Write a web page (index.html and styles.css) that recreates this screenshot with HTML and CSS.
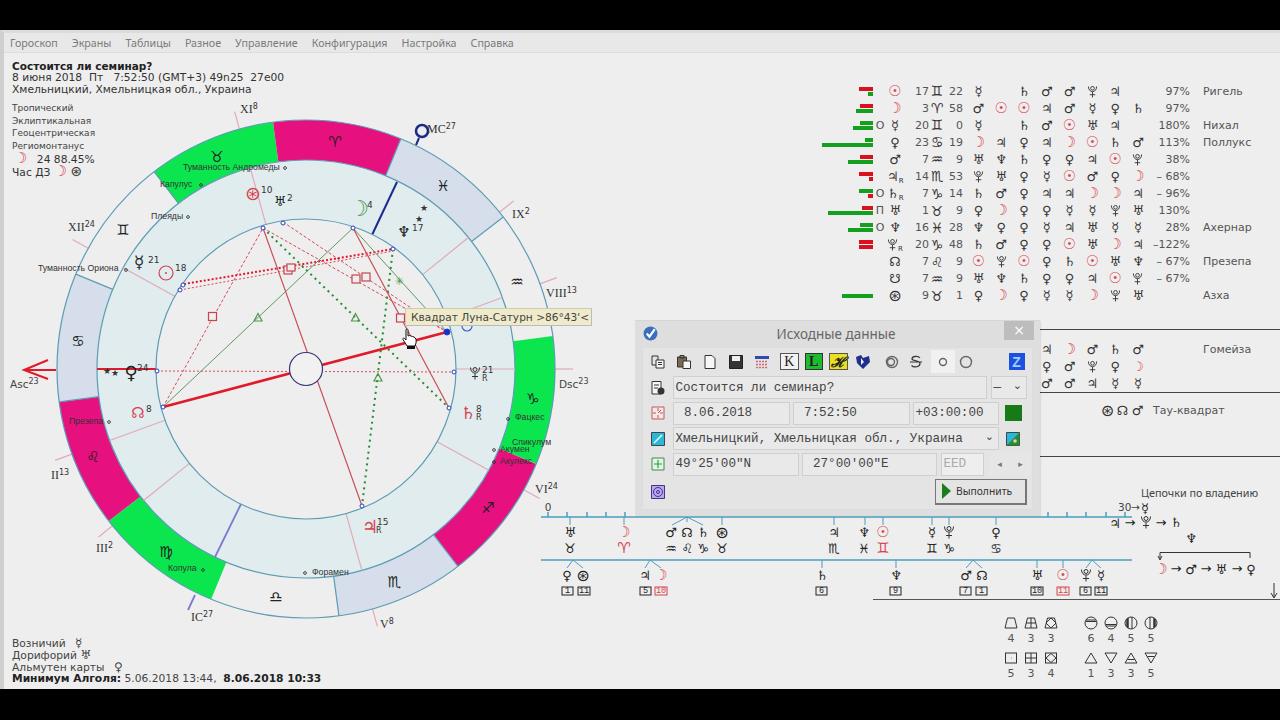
FILE: index.html
```html
<!DOCTYPE html>
<html lang="ru">
<head>
<meta charset="utf-8">
<title>Гороскоп</title>
<link rel="stylesheet" href="styles.css">
</head>
<body>
<div class="app">
  <nav class="menu">
    <span>Гороскоп</span><span>Экраны</span><span>Таблицы</span><span>Разное</span><span>Управление</span><span>Конфигурация</span><span>Настройка</span><span>Справка</span>
  </nav>
  <div class="main">
    <aside class="left">
      <div class="head">
        <div class="b">Состоится ли семинар?</div>
        <div class="pre">8 июня 2018  Пт   7:52:50 (GMT+3) 49n25  27e00</div>
        <div>Хмельницкий, Хмельницкая обл., Украина</div>
      </div>
      <div class="system">
        <div>Тропический</div><div>Эклиптикальная</div><div>Геоцентрическая</div><div>Региомонтанус</div>
      </div>
      <div class="hour">
        <div class="pre"><span class="red sym moonpad">☽</span> 24 88.45%</div>
        <div class="pre">Час ДЗ <span class="red sym">☽</span> <span class="sym fw2">⊛</span></div>
      </div>
      <div class="foot">
        <div>Возничий <span class="sym footsym">☿</span></div>
        <div>Дорифорий <span class="sym">♅</span></div>
        <div>Альмутен карты <span class="sym footsym">♀</span></div>
        <div><b>Минимум Алголя:</b> 5.06.2018 13:44, &nbsp;<b>8.06.2018 10:33</b></div>
      </div>
    </aside>
    <section class="right">
      <div class="table">
        <div class="row"><div class="bars"><i class="bar rd" style="width:14px"></i><i class="bar gn" style="width:5px"></i></div><span></span><span class="c red">☉</span><span class="n">17</span><span class="c">♊</span><span class="m">22</span><span class="c">☿</span><span></span><span class="c">♄</span><span class="c">♂</span><span class="c">♂</span><span class="c"><svg class="plu"><use href="#pl"/></svg></span><span class="c">♃</span><span></span><span class="pct">97%</span><span class="star">Ригель</span></div>
        <div class="row"><div class="bars"><i class="bar rd" style="width:13px"></i><i class="bar gn" style="width:17px"></i></div><span></span><span class="c red">☽</span><span class="n">3</span><span class="c">♈</span><span class="m">58</span><span class="c">♂</span><span class="c red">☉</span><span class="c red">☉</span><span class="c">♃</span><span class="c">♂</span><span class="c">☿</span><span class="c">♀</span><span class="c">♄</span><span class="pct">97%</span></div>
        <div class="row"><div class="bars"><i class="bar gn" style="width:13px"></i><i class="bar gn" style="width:20px"></i></div><span class="mk">О</span><span class="c">☿</span><span class="n">20</span><span class="c">♊</span><span class="m">0</span><span class="c">☿</span><span></span><span class="c">♄</span><span class="c">♂</span><span class="c red">☉</span><span class="c">♅</span><span class="c">♃</span><span></span><span class="pct">180%</span><span class="star">Нихал</span></div>
        <div class="row"><div class="bars"><i class="bar gn" style="width:8px"></i><i class="bar gn" style="width:51px"></i></div><span></span><span class="c">♀</span><span class="n">23</span><span class="c">♋</span><span class="m">19</span><span class="c red">☽</span><span class="c">♃</span><span class="c">♀</span><span class="c">♃</span><span class="c red">☽</span><span class="c red">☉</span><span class="c">♄</span><span class="c">♂</span><span class="pct">113%</span><span class="star">Поллукс</span></div>
        <div class="row"><div class="bars"><i class="bar rd" style="width:13px"></i><i class="bar gn" style="width:25px"></i></div><span></span><span class="c">♂</span><span class="n">7</span><span class="c">♒</span><span class="m">9</span><span class="c">♅</span><span class="c">♆</span><span class="c">♄</span><span class="c">♀</span><span class="c">♀</span><span class="c">♃</span><span class="c red">☉</span><span class="c"><svg class="plu"><use href="#pl"/></svg></span><span class="pct">38%</span></div>
        <div class="row"><div class="bars"><i class="bar rd" style="width:14px"></i><i class="bar rd" style="width:4px"></i></div><span></span><span class="c">♃<sub>R</sub></span><span class="n">14</span><span class="c">♏</span><span class="m">53</span><span class="c"><svg class="plu"><use href="#pl"/></svg></span><span class="c">♅</span><span class="c">♀</span><span class="c">☿</span><span class="c red">☉</span><span class="c">♂</span><span class="c">♀</span><span class="c red">☽</span><span class="pct">– 68%</span></div>
        <div class="row"><div class="bars"><i class="bar gn" style="width:14px"></i><i class="bar rd" style="width:5px"></i></div><span class="mk">О</span><span class="c">♄<sub>R</sub></span><span class="n">7</span><span class="c">♑</span><span class="m">14</span><span class="c">♄</span><span class="c">♂</span><span class="c">♀</span><span class="c">♃</span><span class="c">♃</span><span class="c red">☽</span><span class="c red">☽</span><span class="c">♃</span><span class="pct">– 96%</span></div>
        <div class="row"><div class="bars"><i class="bar rd" style="width:11px"></i><i class="bar gn" style="width:45px"></i></div><span class="mk">П</span><span class="c">♅</span><span class="n">1</span><span class="c">♉</span><span class="m">9</span><span class="c">♀</span><span class="c red">☽</span><span class="c">♀</span><span class="c">♀</span><span class="c">☿</span><span class="c">☿</span><span class="c"><svg class="plu"><use href="#pl"/></svg></span><span class="c">♅</span><span class="pct">130%</span></div>
        <div class="row"><div class="bars"><i class="bar gn" style="width:13px"></i><i class="bar gn" style="width:25px"></i></div><span class="mk">О</span><span class="c">♆</span><span class="n">16</span><span class="c">♓</span><span class="m">28</span><span class="c">♆</span><span class="c">♀</span><span class="c">♀</span><span class="c">☿</span><span class="c">♃</span><span class="c">♅</span><span class="c">☿</span><span class="c">☿</span><span class="pct">28%</span><span class="star">Ахернар</span></div>
        <div class="row"><div class="bars"><i class="bar rd" style="width:14px"></i><i class="bar rd" style="width:14px"></i></div><span></span><span class="c"><svg class="plu"><use href="#pl"/></svg><sub>R</sub></span><span class="n">20</span><span class="c">♑</span><span class="m">48</span><span class="c">♄</span><span class="c">♂</span><span class="c">♀</span><span class="c">♀</span><span class="c red">☉</span><span class="c">♅</span><span class="c red">☽</span><span class="c">♃</span><span class="pct">–122%</span></div>
        <div class="row"><div class="bars"></div><span></span><span class="c">☊</span><span class="n">7</span><span class="c">♌</span><span class="m">9</span><span class="c red">☉</span><span class="c"><svg class="plu"><use href="#pl"/></svg></span><span class="c red">☉</span><span class="c">♀</span><span class="c">♄</span><span class="c red">☉</span><span class="c">♅</span><span class="c">♆</span><span class="pct">– 67%</span><span class="star">Презепа</span></div>
        <div class="row"><div class="bars"></div><span></span><span class="c">☋</span><span class="n">7</span><span class="c">♒</span><span class="m">9</span><span class="c">♅</span><span class="c">♆</span><span class="c">♄</span><span class="c">♀</span><span class="c">♀</span><span class="c">♃</span><span class="c red">☉</span><span class="c"><svg class="plu"><use href="#pl"/></svg></span><span class="pct">– 67%</span></div>
        <div class="row"><div class="bars"><i class="bar gn" style="width:31px"></i></div><span></span><span class="c fw">⊛</span><span class="n">9</span><span class="c">♉</span><span class="m">1</span><span class="c">♀</span><span class="c red">☽</span><span class="c">♀</span><span class="c">☿</span><span class="c">☿</span><span class="c red">☽</span><span class="c"><svg class="plu"><use href="#pl"/></svg></span><span class="c">♅</span><span class="star">Азха</span></div>
      </div>
      <div class="table table2">
        <div class="row"><span class="c from4">♃</span><span class="c red">☽</span><span class="c">♂</span><span class="c">♄</span><span class="c">♂</span><span class="star">Гомейза</span></div>
        <div class="row"><span class="c from4">♀</span><span class="c">♂</span><span class="c"><svg class="plu"><use href="#pl"/></svg></span><span class="c">♀</span><span class="c red">☽</span></div>
        <div class="row"><span class="c from4">♂</span><span class="c">♂</span><span class="c">♃</span><span class="c">☿</span><span class="c">☿</span></div>
      </div>
      <div class="tau"><span class="c fw">⊛</span><span class="c">☊</span><span class="c">♂</span><span class="taulabel">Тау-квадрат</span></div>
      <div class="stats">
        <svg class="ic" viewBox="0 0 14 14"><path d="M3.5 2H10.5L13 12H1Z"/></svg>
        <svg class="ic" viewBox="0 0 14 14"><path d="M3.5 2H10.5L13 12H1ZM7 2V12M2 7H12"/></svg>
        <svg class="ic" viewBox="0 0 14 14"><path d="M3.5 2H10.5L13 12H1ZM7 2L12 7L7 12L2 7Z"/></svg>
        <span></span>
        <svg class="ic" viewBox="0 0 14 14"><circle cx="7" cy="7" r="6"/><path d="M2 4H12M2 5.5H12"/></svg>
        <svg class="ic" viewBox="0 0 14 14"><circle cx="7" cy="7" r="6"/><path d="M2 10H12M2 8.5H12"/></svg>
        <svg class="ic" viewBox="0 0 14 14"><circle cx="7" cy="7" r="6"/><path class="thick" d="M4 2V12M3 3V11"/><path d="M8 1V13"/></svg>
        <svg class="ic" viewBox="0 0 14 14"><circle cx="7" cy="7" r="6"/><path class="thick" d="M10 2V12M11 3V11"/><path d="M6 1V13"/></svg>
        <span>4</span><span>3</span><span>3</span><span></span><span>6</span><span>4</span><span>5</span><span>5</span>
        <svg class="ic" viewBox="0 0 14 14"><rect x="1.5" y="2" width="11" height="10"/><path d="M7 7h.5"/></svg>
        <svg class="ic" viewBox="0 0 14 14"><rect x="1.5" y="2" width="11" height="10"/><path d="M7 2V12M1.5 7H12.5"/></svg>
        <svg class="ic" viewBox="0 0 14 14"><rect x="1.5" y="2" width="11" height="10"/><path d="M7 2.5L12 7L7 11.5L2 7Z"/></svg>
        <span></span>
        <svg class="ic" viewBox="0 0 14 14"><path d="M7 2L13 12H1Z"/></svg>
        <svg class="ic" viewBox="0 0 14 14"><path d="M1 2H13L7 12Z"/></svg>
        <svg class="ic" viewBox="0 0 14 14"><path d="M7 2L13 12H1ZM3.5 8.5H10.5"/></svg>
        <svg class="ic" viewBox="0 0 14 14"><path d="M1 2H13L7 12ZM3.5 5.5H10.5"/></svg>
        <span>5</span><span>3</span><span>4</span><span></span><span>1</span><span>3</span><span>3</span><span>5</span>
      </div>
    </section>
  </div>
</div>

<svg class="chart" viewBox="0 0 600 640" aria-label="Карта">
  <symbol id="pl" viewBox="0 0 12 14">
    <circle class="plsym" cx="6" cy="3.500" r="2"/>
    <path class="plsym" d="M1.500 1.500C1.500 9 10.500 9 10.500 1.500M6 7.500V13.500M3 10.500H9"/>
  </symbol>
  <circle class="ring out" cx="306" cy="369" r="249"/>
  <line class="cusp" x1="555" y1="369" x2="573" y2="369" transform="rotate(-105.5 306 369)"/>
  <line class="cusp" x1="555" y1="369" x2="573" y2="369" transform="rotate(-39 306 369)"/>
  <line class="cusp" x1="555" y1="369" x2="573" y2="369" transform="rotate(-20 306 369)"/>
  <line class="cusp" x1="555" y1="369" x2="573" y2="369"/>
  <line class="cusp" x1="555" y1="369" x2="573" y2="369" transform="rotate(29 306 369)"/>
  <line class="cusp" x1="555" y1="369" x2="573" y2="369" transform="rotate(74.5 306 369)"/>
  <line class="cusp" x1="555" y1="369" x2="573" y2="369" transform="rotate(141 306 369)"/>
  <line class="cusp" x1="555" y1="369" x2="573" y2="369" transform="rotate(160 306 369)"/>
  <line class="cusp" x1="555" y1="369" x2="573" y2="369" transform="rotate(-151 306 369)"/>

  <circle class="seg grn" cx="306" cy="369" r="229" pathLength="360" transform="rotate(-127.6 306 369)"/>
  <circle class="seg pnk" cx="306" cy="369" r="229" pathLength="360" transform="rotate(-97.6 306 369)"/>
  <circle class="seg gry" cx="306" cy="369" r="229" pathLength="360" transform="rotate(-67.6 306 369)"/>
  <circle class="seg grn" cx="306" cy="369" r="229" pathLength="360" transform="rotate(-7.6 306 369)"/>
  <circle class="seg pnk" cx="306" cy="369" r="229" pathLength="360" transform="rotate(22.4 306 369)"/>
  <circle class="seg gry" cx="306" cy="369" r="229" pathLength="360" transform="rotate(52.4 306 369)"/>
  <circle class="seg grn" cx="306" cy="369" r="229" pathLength="360" transform="rotate(112.4 306 369)"/>
  <circle class="seg pnk" cx="306" cy="369" r="229" pathLength="360" transform="rotate(142.4 306 369)"/>
  <circle class="seg gry" cx="306" cy="369" r="229" pathLength="360" transform="rotate(172.4 306 369)"/>
  <line class="div" x1="515" y1="369" x2="555" y2="369" transform="rotate(-157.6 306 369)"/>
  <line class="div" x1="515" y1="369" x2="555" y2="369" transform="rotate(-127.6 306 369)"/>
  <line class="div" x1="515" y1="369" x2="555" y2="369" transform="rotate(-67.6 306 369)"/>
  <line class="div" x1="515" y1="369" x2="555" y2="369" transform="rotate(-37.6 306 369)"/>
  <line class="div" x1="515" y1="369" x2="555" y2="369" transform="rotate(52.4 306 369)"/>
  <line class="div" x1="515" y1="369" x2="555" y2="369" transform="rotate(82.4 306 369)"/>
  <line class="div" x1="515" y1="369" x2="555" y2="369" transform="rotate(172.4 306 369)"/>
  <circle class="ring line" cx="306" cy="369" r="249"/>
  <circle class="ring mid" cx="306" cy="369" r="209"/>
  <line class="cusp" x1="456" y1="369" x2="515" y2="369" transform="rotate(-105.5 306 369)"/>
  <line class="cusp" x1="456" y1="369" x2="515" y2="369" transform="rotate(-39 306 369)"/>
  <line class="cusp" x1="456" y1="369" x2="515" y2="369" transform="rotate(-20 306 369)"/>
  <line class="cusp" x1="456" y1="369" x2="515" y2="369"/>
  <line class="cusp" x1="456" y1="369" x2="515" y2="369" transform="rotate(29 306 369)"/>
  <line class="cusp" x1="456" y1="369" x2="515" y2="369" transform="rotate(74.5 306 369)"/>
  <line class="cusp" x1="456" y1="369" x2="515" y2="369" transform="rotate(141 306 369)"/>
  <line class="cusp" x1="456" y1="369" x2="515" y2="369" transform="rotate(160 306 369)"/>
  <line class="cusp" x1="456" y1="369" x2="515" y2="369" transform="rotate(-151 306 369)"/>
  <line class="mc" x1="372" y1="235" x2="397" y2="182"/>
  <line class="mc" x1="416" y1="145" x2="419" y2="138"/>
  <circle class="mccirc" cx="422" cy="131" r="6"/>
  <line class="ic" x1="241" y1="504" x2="215" y2="557"/>
  <line class="ic" x1="195" y1="595" x2="188" y2="610"/>
  <path class="asc" d="M97 369H157M24 370H56M48 360L24 370L48 379"/>
  <circle class="ring in" cx="306" cy="369" r="150"/>

  <path class="asp rdash" d="M163 407L263 228M263 228L447 332M283 222L447 332"/>
  <path class="asp rdot" d="M157 371L454 372M180 290L393 251"/>
  <path class="asp rdot2" d="M184 284L393 249"/>
  <path class="asp gthin" d="M163 407L353 228L447 332"/>
  <path class="asp gdot" d="M263 228L449 408M393 249L362 506"/>
  <path class="asp rthin" d="M263 228L362 506M353 228L449 408"/>
  <path class="asp rthick" d="M163 407L447 332"/>
  <circle class="hub" cx="306" cy="369" r="16.5"/>

  <g class="sq">
    <rect x="208.500" y="312.500" width="8" height="8"/>
    <rect x="284" y="266" width="8" height="8"/>
    <rect x="287" y="264" width="8" height="7"/>
    <rect x="352" y="275" width="8" height="8"/>
    <rect x="362" y="273" width="8" height="8"/>
    <rect x="396.500" y="314" width="8" height="8"/>
  </g>
  <g class="tri">
    <path d="M258 313.500L262 321H254Z"/>
    <path d="M355.500 313.500L359.500 321H351.500Z"/>
    <path d="M378 373.500L382 381H374Z"/>
  </g>
  <text class="g grtx s11" x="399" y="281">✳</text>
  <g class="pt">
    <circle cx="263" cy="228" r="2"/><circle cx="283" cy="223" r="2"/><circle cx="353" cy="228" r="2"/><circle cx="393" cy="249" r="2"/><circle cx="454" cy="372" r="2"/><circle cx="449" cy="408" r="2"/><circle cx="362" cy="506" r="2"/><circle cx="163" cy="407" r="2"/><circle cx="157" cy="371" r="2"/><circle cx="180" cy="290" r="2"/><circle cx="183" cy="285" r="2"/>
    <circle class="filled" cx="447" cy="332" r="3"/>
  </g>
  <circle class="bluemark" cx="467" cy="326" r="5"/>

  <g class="g s15">
    <text x="217" y="157">♉</text><text x="335" y="142">♈</text><text x="443" y="186">♓</text><text x="517" y="282">♒</text><text x="533" y="399">♑</text><text x="488" y="508">♐</text><text x="394" y="582">♏</text><text x="276" y="597">♎</text><text x="166" y="552">♍</text><text x="93" y="457">♌</text><text x="78" y="341">♋</text><text x="123" y="230">♊</text>
  </g>

  <circle class="sun" cx="166" cy="273" r="7"/><circle class="sundot" cx="166" cy="273" r="1"/>
  <text class="tiny redtx" x="175" y="271">18</text>
  <text class="g s17" x="139" y="262">☿</text><text class="tiny" x="148" y="263">21</text>
  <text class="g s19 redtx" x="253" y="193">⊛</text><text class="tiny redtx" x="261" y="193">10</text>
  <text class="g s14" x="280" y="201">♅</text><text class="tiny" x="287" y="201">2</text>
  <text class="g s22 grtx" x="359" y="208">☽</text><text class="tiny grtx" x="367" y="208">4</text>
  <text class="g s15" x="404" y="232">♆</text><text class="tiny" x="412" y="231">17</text>
  <text class="tiny" x="420" y="211">★</text><text class="tiny" x="415" y="222">★</text>
  <use class="plu" href="#pl" x="469" y="366" width="12" height="14"/>
  <text class="tiny" x="482" y="373">21</text><text class="tinyr" x="482" y="381">R</text>
  <text class="g s17 redtx" x="468" y="413">♄</text><text class="tiny redtx" x="476" y="412">8</text><text class="tinyr redtx" x="476" y="420">R</text>
  <text class="g s18 redtx" x="370" y="526">♃</text><text class="tiny redtx" x="377" y="525">15</text><text class="tinyr redtx" x="376" y="533">R</text>
  <text class="g s15 redtx" x="138" y="413">☊</text><text class="tiny redtx" x="146" y="412">8</text>
  <text class="g s18" x="131" y="372">♀</text><text class="tiny" x="137" y="371">24</text>
  <text class="tiny" x="103" y="374">★</text><text class="tiny" x="111" y="376">★</text>

  <g class="fix">
    <text x="183" y="170">Туманность Андромеды</text>
    <text x="160" y="187">Капулус</text>
    <text x="151" y="219">Плеяды</text>
    <text x="38" y="271">Туманность Ориона</text>
    <text x="69" y="424">Презепа</text>
    <text x="168" y="571">Копула</text>
    <text x="312" y="575">Форамен</text>
    <text x="515" y="420">Фацкес</text>
    <text x="512" y="445">Спикулум</text>
    <text x="500" y="452">Акумен</text>
    <text x="500" y="464">Акулекс</text>
  </g>
  <g class="dots">
    <circle cx="285" cy="168" r="1.400"/><circle cx="201" cy="185" r="1.400"/><circle cx="188" cy="217" r="1.400"/><circle cx="126" cy="270" r="1.400"/><circle cx="109" cy="422" r="1.400"/><circle cx="203" cy="570" r="1.400"/><circle cx="305" cy="573" r="1.400"/><circle cx="508" cy="419" r="1.400"/><circle cx="494" cy="450" r="1.400"/><circle cx="494" cy="462" r="1.400"/>
  </g>

  <g class="lbl">
    <text x="427" y="133">MC<tspan class="sup" dy="-4">27</tspan></text>
    <text class="sans" x="559" y="388">Dsc<tspan class="sup" dy="-4">23</tspan></text>
    <text class="sans" x="10" y="388">Asc<tspan class="sup" dy="-4">23</tspan></text>
    <text x="512" y="218">IX<tspan class="sup" dy="-4">2</tspan></text>
    <text x="546" y="297">VIII<tspan class="sup" dy="-4">13</tspan></text>
    <text x="68" y="231">XII<tspan class="sup" dy="-4">24</tspan></text>
    <text x="240" y="113">XI<tspan class="sup" dy="-4">8</tspan></text>
    <text x="51" y="479">II<tspan class="sup" dy="-4">13</tspan></text>
    <text x="96" y="552">III<tspan class="sup" dy="-4">2</tspan></text>
    <text x="191" y="621">IC<tspan class="sup" dy="-4">27</tspan></text>
    <text x="380" y="628">V<tspan class="sup" dy="-4">8</tspan></text>
    <text x="535" y="493">VI<tspan class="sup" dy="-4">24</tspan></text>
  </g>
</svg>

<div class="tooltip">Квадрат Луна-Сатурн &gt;86°43'&lt;</div>
<svg class="cursor" viewBox="0 0 16 22"><path class="hand" d="M4 1.500C5 .5 6 1 6 2.500V8L7.500 7.500L9 8L10.500 8.500L12 9C14 10 14.500 12 14 15L13 18H5L1 11.500C.5 10 2 9.500 3 11L4 12Z"/><path class="cuff" d="M5 18H13V21H5Z"/></svg>

<svg class="timeline" viewBox="530 480 750 130" aria-label="Хронология">
  <path class="axis" d="M541 517H1132M541 560H1132"/>
  <path class="axis ticks" d="M548 512V517M567 512V517M587 512V517M606 512V517M625 512V517M1048 512V517M1067 512V517M1086 512V517M1106 512V517M1125 512V517"/>
  <path class="branch" d="M570 517V525M624 517V525M672 525L687 517L703 525M687 517V522M722 517V525M834 517V525M865 517V525M883 517V525M932 517V525M949 517V525M996 517V525"/>
  <path class="branch" d="M567 568L573 560L583 568M645 568L650 560L661 568M822 560V568M896 560V568M966 568L973 560L982 568M1037 560V568M1063 560V568M1086 568L1092 560L1101 568"/>
  <text class="tnum" x="548" y="511">0</text>
  <g class="g s13">
    <text x="570" y="532">♅</text><text x="570" y="548">♉</text>
    <text class="redtx" x="624" y="532">☽</text><text class="redtx" x="624" y="548">♈</text>
    <text x="671" y="532">♂</text><text x="671" y="548">♒</text>
    <text x="687" y="532">☊</text><text x="687" y="548">♌</text>
    <text x="703" y="532">♄</text><text x="703" y="548">♑</text>
    <text class="fwt" x="722" y="532">⊛</text><text x="722" y="548">♉</text>
    <text x="834" y="532">♃</text><text x="834" y="548">♏</text>
    <text x="864" y="532">♆</text><text x="864" y="548">♓</text>
    <text class="redtx" x="883" y="532">☉</text><text class="redtx" x="883" y="548">♊</text>
    <text x="932" y="532">☿</text><text x="932" y="548">♊</text>
    <text x="949" y="548">♑</text>
    <text x="996" y="532">♀</text><text x="996" y="548">♋</text>
    <text x="567" y="575">♀</text><text class="fwt" x="583" y="575">⊛</text>
    <text x="645" y="575">♃</text><text class="redtx" x="661" y="575">☽</text>
    <text x="822" y="575">♄</text><text x="896" y="575">♆</text>
    <text x="966" y="575">♂</text><text x="982" y="575">☊</text>
    <text x="1037" y="575">♅</text><text class="redtx" x="1063" y="575">☉</text>
    <text x="1101" y="575">☿</text>
  </g>
  <use class="plu" href="#pl" x="943" y="525" width="12" height="14"/>
  <use class="plu" href="#pl" x="1080" y="568" width="12" height="14"/>
  <use class="plu" href="#pl" x="1140" y="515" width="12" height="14"/>
  <g class="box">
    <rect x="562" y="587" width="11" height="8"/><rect x="578" y="587" width="12" height="8"/>
    <rect x="640" y="587" width="11" height="8"/><rect class="rb" x="655" y="587" width="12" height="8"/>
    <rect x="816" y="587" width="11" height="8"/><rect x="890" y="587" width="11" height="8"/>
    <rect x="960" y="587" width="11" height="8"/><rect x="976" y="587" width="11" height="8"/>
    <rect x="1031" y="587" width="12" height="8"/><rect class="rb" x="1057" y="587" width="12" height="8"/>
    <rect x="1080" y="587" width="11" height="8"/><rect x="1095" y="587" width="12" height="8"/>
  </g>
  <g class="boxt">
    <text x="567.500" y="591">1</text><text x="584" y="591">11</text><text x="645.500" y="591">5</text><text class="redtx" x="661" y="591">10</text><text x="821.500" y="591">6</text><text x="895.500" y="591">9</text><text x="965.500" y="591">7</text><text x="981.500" y="591">1</text><text x="1037" y="591">10</text><text class="redtx" x="1063" y="591">11</text><text x="1085.500" y="591">6</text><text x="1101" y="591">11</text>
  </g>
  <path class="rule" d="M873 599.500H1280"/>
  <path class="rule thin" d="M1274 583V597M1271 593L1274 598L1277 593"/>
  <text class="ttl" x="1141" y="497">Цепочки по владению</text>
  <text class="tnum start" x="1118" y="511">30→</text>
  <text class="g s13" x="1145" y="508">☿</text>
  <g class="g s13">
    <text x="1115" y="523">♃</text><text x="1130" y="522">→</text><text x="1161" y="522">→</text><text x="1176" y="522">♄</text>
    <text x="1191" y="538">♆</text>
    <text class="redtx" x="1161" y="569">☽</text><text x="1176" y="568">→</text><text x="1191" y="569">♂</text><text x="1206" y="568">→</text><text x="1221" y="569">♅</text><text x="1237" y="568">→</text><text x="1251" y="569">♀</text>
  </g>
  <path class="rule thin" d="M1160 559V552.500H1250V558M1158 556L1160 560L1162 556"/>
</svg>

<div class="dialog">
  <div class="titlebar">
    <svg class="appicon" viewBox="0 0 14 14"><circle class="ai1" cx="7" cy="7" r="6.500"/><path class="ai2" d="M3.500 7L6 10L11 3"/></svg>
    <span class="dtitle">Исходные данные</span>
    <span class="close">×</span>
  </div>
  <div class="panel">
    <div class="toolbar">
      <span class="tb"><svg viewBox="0 0 16 16"><path class="i1" d="M2 2H8V11H2Z"/><path class="i1w" d="M6 6H14V14H6Z"/><path class="i1" d="M8 8.500H12M8 10.500H12"/></svg></span>
      <span class="tb"><svg viewBox="0 0 16 16"><path class="i2" d="M1.500 3H10.500V13H1.500Z"/><path class="i1" d="M4 1.500H8V4H4Z"/><path class="i1w" d="M7 7H14.500V14.500H7Z"/></svg></span>
      <span class="tb"><svg viewBox="0 0 16 16"><path class="i1w" d="M3 1.500H10L13 4.500V14.500H3Z"/></svg></span>
      <span class="tb"><svg viewBox="0 0 16 16"><path class="i3" d="M1.500 1.500H14.500V14.500H1.500Z"/><path class="i3w" d="M4 2H12V7H4Z"/></svg></span>
      <span class="tb"><svg viewBox="0 0 16 16"><path class="i4" d="M1 2H15V5H1Z"/><path class="i5" d="M2 7.500H14M2 10.500H14M2 13.500H14"/></svg></span>
      <span class="tb letter lk">K</span>
      <span class="tb s letter ll">L</span>
      <span class="tb s letter lh">ℋ</span>
      <span class="tb s"><svg viewBox="0 0 16 16"><path class="i6" d="M1 3L6 1L8 4L14 2L15 8L8 15L2 9Z"/><path class="i3w" d="M6 4L9 8L6 11Z"/></svg></span>
      <span class="tb s gap1"><svg viewBox="0 0 16 16"><circle class="i7" cx="8" cy="8" r="5.500"/><circle class="i7" cx="7" cy="8" r="3.500"/></svg></span>
      <span class="tb n"><svg viewBox="0 0 16 16"><path class="i8" d="M12 4C10 1.500 4 2 4 5C4 7 12 6 12 9.500C12 13 6 14 3.500 11.500M2 8H14"/></svg></span>
      <span class="tb pressed"><svg viewBox="0 0 16 16"><circle class="i7" cx="8" cy="8" r="3.500"/></svg></span>
      <span class="tb n"><svg viewBox="0 0 16 16"><circle class="i7" cx="8" cy="8" r="5.500"/></svg></span>
      <span class="tb letter lz">Z</span>
    </div>
    <div class="drow">
      <span class="dic"><svg viewBox="0 0 16 16"><path class="i1w" d="M2 1.500H11V14H2Z"/><path class="i1" d="M4 5H9M4 8H8"/><circle class="i9" cx="11" cy="11" r="3.500"/></svg></span>
      <span class="inp w313">Состоится ли семинар?</span>
      <span class="inp sel w36"><span>—</span><span class="chev">⌄</span></span>
    </div>
    <div class="drow">
      <span class="dic"><svg viewBox="0 0 16 16"><path class="i10" d="M2 2H14V14H2ZM8 3V6M8 10V13M3 8H6M10 8H13M8 8L11 5"/></svg></span>
      <span class="inp w117 ind">8.06.2018</span>
      <span class="inp w117 ind2">7:52:50</span>
      <span class="inp w86">+03:00:00</span>
      <span class="swatch"></span>
    </div>
    <div class="drow">
      <span class="dic"><svg viewBox="0 0 16 16"><path class="i11" d="M1.500 1.500H14.500V14.500H1.500Z"/><path class="i12" d="M4 12L12 4"/></svg></span>
      <span class="inp sel w326"><span>Хмельницкий, Хмельницкая обл., Украина</span><span class="chev">⌄</span></span>
      <span class="dic2"><svg viewBox="0 0 16 16"><path class="i11" d="M1.500 1.500H14.500V14.500H1.500Z"/><path class="i13" d="M1.500 14.500L14.500 1.500V14.500Z"/><circle class="i14" cx="10" cy="10" r="1.800"/></svg></span>
    </div>
    <div class="drow">
      <span class="dic"><svg viewBox="0 0 16 16"><path class="i15" d="M2 2H14V14H2Z"/><path class="i16" d="M8 4V12M4 8H12"/></svg></span>
      <span class="inp w127">49°25'00"N</span>
      <span class="inp w135 ind3">27°00'00"E</span>
      <span class="inp w43 dis">EED</span>
      <span class="stepper"><span>◂</span><span>▸</span></span>
    </div>
    <div class="drow last">
      <span class="dic"><svg viewBox="0 0 16 16"><path class="i17" d="M1.500 1.500H14.500V14.500H1.500Z"/><circle class="i18" cx="8" cy="8" r="4.500"/><circle class="i18" cx="8" cy="8" r="1.500"/></svg></span>
      <button class="run"><i class="play"></i>Выполнить</button>
    </div>
  </div>
</div>
</body>
</html>
```

FILE: styles.css
```css
* { box-sizing: border-box; }
html, body { margin: 0; height: 720px; overflow: hidden; background: #000; }
body { position: relative; font-family: "DejaVu Sans", sans-serif; font-size: 11px; color: #333; }

.app { margin-top: 30px; height: 659px; display: flex; flex-direction: column; background: #eee; border-left: 4px solid #cfcfcf; border-top: 3px solid #dcdcdc; }
.menu { height: 20px; flex: none; display: flex; align-items: center; padding-left: 6px; gap: 14px; background: #e8e8e8; border-bottom: 1px solid #ddd; color: #7a7a7a; font-family: "Noto Sans", sans-serif; font-size: 10.700px; }

.main { flex: 1; display: grid; grid-template-columns: 796px 484px; min-height: 0; }
.left { display: flex; flex-direction: column; padding: 7px 0 4px 8px; position: relative; z-index: 1; font-size: 10.700px; }
.head { line-height: 12px; color: #333; }
.head .b { font-weight: 700; color: #222; font-size: 10.500px; }
.pre { white-space: pre; }
.system { margin-top: 6px; font-size: 9px; line-height: 12.500px; color: #444; }
.hour { margin-top: -1px; }
.hour > div { height: 13px; line-height: 13px; }
.sym { font-size: 12px; line-height: 1; }
.hour .red { font-size: 15px; }
.fw2 { font-size: 14px; }
.red { color: #d8434f; }
.moonpad { padding: 0 6px 0 2px; }
.foot { margin-top: auto; color: #444; }
.foot > div { height: 12px; line-height: 12px; white-space: pre; }
.foot b { color: #222; }
.footsym { margin-left: 6px; }

.right { display: flex; flex-direction: column; padding-top: 29.500px; }
.table { flex: none; }
.row { display: grid; grid-template-columns: 73px 14px 16px 26px 16px 22px repeat(8, 22.800px) 40.600px 90px; grid-auto-rows: 17.080px; height: 17.080px; align-items: center; color: #555; }
.row > :nth-child(5) { font-size: 14px; }
.table2 .row > :nth-child(5) { font-size: 13px; }
.bars { display: flex; flex-direction: column; align-items: flex-end; gap: 1px; }
.bar { display: block; height: 4px; }
.rd { background: #d9101e; }
.gn { background: #12a01e; }
.mk { text-align: center; font-size: 11px; color: #555; }
.c { text-align: center; font-size: 13px; color: #333; white-space: nowrap; line-height: 1; }
.c.red { color: #d8434f; font-size: 15px; }
.c.fw { font-size: 16px; }
.c sub { font-size: 7px; vertical-align: -2px; line-height: 0; }
.plu { width: 11px; height: 13px; color: #333; vertical-align: -2px; }
.plsym { fill: none; stroke: #333; stroke-width: 1; }
.n { text-align: right; }
.m { text-align: right; padding-right: 4px; }
.pct { grid-column: 15; text-align: right; white-space: pre; }
.star { grid-column: 16; padding-left: 13px; white-space: nowrap; font-size: 11px; color: #555; }
.table2 { margin-top: 24.500px; padding-top: 10.500px; border-top: 1px solid #444; border-bottom: 1px solid #444; }
.from4 { grid-column-start: 10; }
.tau { height: 64px; flex: none; display: flex; align-items: flex-start; gap: 0; padding: 9px 0 0 300px; border-bottom: 1px solid #444; line-height: 17px; }
.tau .c { width: 15px; line-height: 17px; }
.taulabel { margin-left: 8px; color: #555; }
.stats { margin: auto 0 7px 201px; display: grid; grid-template-columns: repeat(8, 20px); grid-template-rows: 16px 19px 16px 16px; text-align: center; line-height: 16px; color: #555; width: 160px; }
svg.ic { width: 14px; height: 14px; margin: 1px 3px; fill: none; stroke: #333; stroke-width: 1; }
svg.ic .thick { stroke-width: 1.500; }

.chart { position: absolute; left: 0; top: 0; width: 600px; height: 640px; z-index: 2; }
.chart text, .timeline text { font-family: "DejaVu Sans", sans-serif; }
.ring { fill: none; stroke: #5d9cb4; stroke-width: 1.200; }
.ring.out { fill: #eee; stroke: none; }
.ring.mid { fill: #e0ecee; }
.ring.in { fill: #eee; }
.seg { fill: none; stroke-width: 40; stroke-dasharray: 30 330; }
.grn { stroke: #0ce64e; }
.pnk { stroke: #e6107e; }
.gry { stroke: #d5deea; }
.div { stroke: #5d9cb4; stroke-width: 1.200; }
.cusp { stroke: #e2a9b8; stroke-width: 1.200; }
.mc { stroke: #1c2a8c; stroke-width: 2; }
.mccirc { fill: none; stroke: #1c2a8c; stroke-width: 2.500; }
line.ic { stroke: #7a7ad0; stroke-width: 1.800; }
.asc { fill: none; stroke: #e01a28; stroke-width: 2; }
.asp { fill: none; }
.rdash { stroke: #d8495a; stroke-width: 1; stroke-dasharray: 3 2; }
.rdot { stroke: #d8495a; stroke-width: 1; stroke-dasharray: 2 2; }
.rdot2 { stroke: #e01a28; stroke-width: 2; stroke-dasharray: 2 2; }
.gthin { stroke: #5d9a62; stroke-width: 1; }
.gdot { stroke: #1d8f35; stroke-width: 2; stroke-dasharray: 2 4; }
.rthin { stroke: #c8505a; stroke-width: 1.200; }
.rthick { stroke: #e01a28; stroke-width: 2.600; }
.hub { fill: #f1f1f1; stroke: #35357a; stroke-width: 1.200; }
.sq rect { fill: #eee; stroke: #c8434f; stroke-width: 1.200; }
.tri path { fill: none; stroke: #4a9a4a; stroke-width: 1.200; }
.pt circle { fill: #fff; stroke: #2540b8; stroke-width: 1; }
.pt .filled { fill: #1030d0; }
.bluemark { fill: none; stroke: #4060c0; stroke-width: 1.200; }

.g text, text.g { text-anchor: middle; dominant-baseline: central; fill: #222; }
.s11 { font-size: 11px; } .s13 { font-size: 13px; } .s14 { font-size: 14px; } .s15 { font-size: 15px; } .s17 { font-size: 17px; } .s18 { font-size: 18px; } .s19 { font-size: 19px; } .s22 { font-size: 22px; }
.g text.redtx, text.g.redtx, .redtx { fill: #d8434f; }
.g text.redtx { font-size: 15px; }
.g text.fwt { font-size: 16px; }
text.g.grtx, .grtx { fill: #4aa04a; }
.tiny { font-size: 9px; fill: #333; }
.tinyr { font-size: 8px; fill: #333; }
.sun { fill: none; stroke: #d0434f; stroke-width: 1.200; }
.sundot { fill: #d0434f; }
.fix text { font-family: "Liberation Sans", sans-serif; font-size: 8.700px; fill: #333; }
.dots circle { fill: none; stroke: #222; stroke-width: .8; }
.lbl text { font-family: "Liberation Serif", serif; font-size: 12px; fill: #333; }
.lbl text.sans { font-family: "DejaVu Sans", sans-serif; font-size: 10.500px; fill: #444; }
.lbl .sup { font-family: "DejaVu Sans", sans-serif; font-size: 8px; }

.tooltip { position: absolute; left: 405px; top: 308px; width: 187px; height: 18px; z-index: 3; padding: 0 0 0 5px; line-height: 16px; white-space: nowrap; background: #efebca; border: 1px solid #cfcbb0; border-right-color: #bbb; border-bottom-color: #bbb; color: #444; font-size: 10.600px; }
.cursor { position: absolute; left: 402px; top: 328px; width: 16px; height: 22px; z-index: 4; }
.hand { fill: #fff; stroke: #111; stroke-width: 1; }
.cuff { fill: #111; }

.timeline { position: absolute; left: 530px; top: 480px; width: 750px; height: 130px; z-index: 2; }
.axis { stroke: #4d9fbd; stroke-width: 1.500; fill: none; }
.branch { stroke: #4d9fbd; stroke-width: 1; fill: none; }
.tnum { font-size: 10.500px; fill: #444; text-anchor: middle; }
.tnum.start { text-anchor: start; }
.box rect { fill: none; stroke: #222; stroke-width: 1; }
.box rect.rb { stroke: #d8434f; }
.boxt text { font-family: "Liberation Mono", monospace; font-size: 8.500px; text-anchor: middle; dominant-baseline: central; fill: #222; }
.boxt text.redtx { fill: #d8434f; }
.rule { fill: none; stroke: #555; stroke-width: 1.200; }
.rule.thin { stroke: #333; stroke-width: 1; }
.timeline text.ttl { font-family: "Noto Sans", sans-serif; font-size: 10.800px; fill: #444; }

.dialog { position: absolute; left: 635px; top: 320px; width: 405px; height: 195px; z-index: 5; background: #dedede; border-top: 1px solid #d6d6d6; display: flex; flex-direction: column; padding: 0 7px 5px; box-shadow: 1px 1px 1px rgba(0,0,0,.08); }
.titlebar { height: 26px; flex: none; display: flex; align-items: center; position: relative; justify-content: center; }
.appicon { position: absolute; left: 1px; top: 5px; width: 15px; height: 15px; }
.ai1 { fill: #3a6fc0; }
.ai2 { fill: none; stroke: #fff; stroke-width: 2; }
.dtitle { font-family: "Noto Sans", sans-serif; font-size: 13.500px; color: #666; margin-left: -3px; }
.close { position: absolute; right: -1px; top: 0; width: 30px; height: 19px; background: #bdbdbd; color: #fff; text-align: center; font-size: 14px; line-height: 18px; }
.panel { flex: 1; background: #e4e4e4; border: 1px solid #dcdcdc; padding: 1px 0 0 2px; display: flex; flex-direction: column; }
.toolbar { display: flex; height: 25px; align-items: center; margin-bottom: 2px; }
.tb { width: 26px; height: 23px; display: flex; align-items: center; justify-content: center; flex: none; }
.tb svg { width: 16px; height: 16px; fill: none; }
.tb.s { width: 24.500px; }
.tb.n { width: 23px; }
.gap1 { margin-left: 5px; }
.pressed { background: #f1f1f1; margin-left: 3px; width: 24px; }
.letter { font-family: "Liberation Serif", serif; font-size: 14px; }
.lk { margin-left: 2px; }
.lk, .ll, .lh { position: relative; width: 24.500px; background-clip: content-box; padding: 3px 3px; color: #222; }
.lk { background-color: #f2f2f2; outline: 1px solid #555; outline-offset: -4px; }
.ll { background-color: #1dbb2d; outline: 1px solid #333; outline-offset: -4px; font-weight: 700; }
.lh { background-color: #e8e020; outline: 1px solid #555; outline-offset: -4px; font-style: italic; font-weight: 700; }
.lz { margin-left: 27px; width: 24px; background: #1d4fe0; background-clip: content-box; padding: 3px 4px; color: #9fd0ff; font-family: "Liberation Sans", sans-serif; font-weight: 700; font-size: 14px; }
.i1 { fill: none; stroke: #333; stroke-width: 1; }
.i1w { fill: #f6f6f6; stroke: #333; stroke-width: 1; }
.i2 { fill: #7a6a50; stroke: #333; stroke-width: 1; }
.i3 { fill: #333; stroke: #222; }
.i3w { fill: #eee; }
.i4 { fill: #2f4bb0; }
.i5 { stroke: #d06a6a; stroke-width: 1.500; stroke-dasharray: 2 1; fill: none; }
.i6 { fill: #1f2f90; }
.i7 { fill: none; stroke: #666; stroke-width: 1.400; }
.i8 { fill: none; stroke: #333; stroke-width: 1.200; }
.i9 { fill: #333; }
.i10 { fill: #f2e8e8; stroke: #c05a5a; stroke-width: 1; }
.i11 { fill: #28b8d8; stroke: #444; stroke-width: 1; }
.i12 { stroke: #fff; stroke-width: 1.500; }
.i13 { fill: #2a8a3a; }
.i14 { fill: #f0d090; }
.i15 { fill: #e4f2e4; stroke: #448a50; stroke-width: 1; }
.i16 { stroke: #2aa040; stroke-width: 1.200; }
.i17 { fill: #b8a8e8; stroke: #443388; stroke-width: 1; }
.i18 { fill: none; stroke: #4a30a0; stroke-width: 1; }

.drow { display: flex; height: 23px; gap: 3px; margin-bottom: 2.500px; align-items: center; flex: none; }
.dic { width: 26px; display: flex; justify-content: center; margin-right: -1px; }
.dic svg, .dic2 svg { width: 16px; height: 16px; display: block; }
.dic2 { margin-left: 3px; }
.inp { height: 23px; flex: none; display: flex; align-items: center; background: #e9e9e9; border: 1px solid #cfcfcf; padding: 0 1.500px; font-family: "Liberation Mono", monospace; font-size: 12.600px; color: #444; white-space: pre; }
.sel { justify-content: space-between; padding-right: 4px; }
.chev { font-family: "DejaVu Sans", sans-serif; font-size: 11px; line-height: 1; margin-top: -4px; color: #444; }
.w313 { width: 314px; }
.w36 { width: 36px; margin-left: 1px; }
.w117 { width: 117px; }
.w86 { width: 86px; }
.w326 { width: 326px; }
.w127 { width: 126px; }
.w135 { width: 135px; }
.w43 { width: 43px; margin-left: 1px; }
.ind { padding-left: 10px; }
.ind2 { padding-left: 10px; }
.ind3 { padding-left: 10px; }
.dis { color: #aaa; background: #eee; }
.swatch { width: 17px; height: 16px; background: #177a17; margin-left: 3px; }
.stepper { display: flex; margin-left: 2px; }
.stepper span { width: 21px; height: 23px; background: #e6e6e6; color: #777; font-size: 9px; display: flex; align-items: center; justify-content: center; }
.last { justify-content: space-between; height: 27px; padding-right: 5px; }
.run { width: 92px; height: 26px; display: flex; align-items: center; padding: 0 0 0 6px; margin: 0; background: #e4e4e4; border: 1px solid #777; border-width: 1px 2px 2px 1px; font-family: "Noto Sans", sans-serif; font-size: 10.300px; color: #333; }
.play { width: 0; height: 0; border-style: solid; border-width: 8px 0 8px 9px; border-color: transparent transparent transparent #1d7d1d; margin-right: 5px; }
```
